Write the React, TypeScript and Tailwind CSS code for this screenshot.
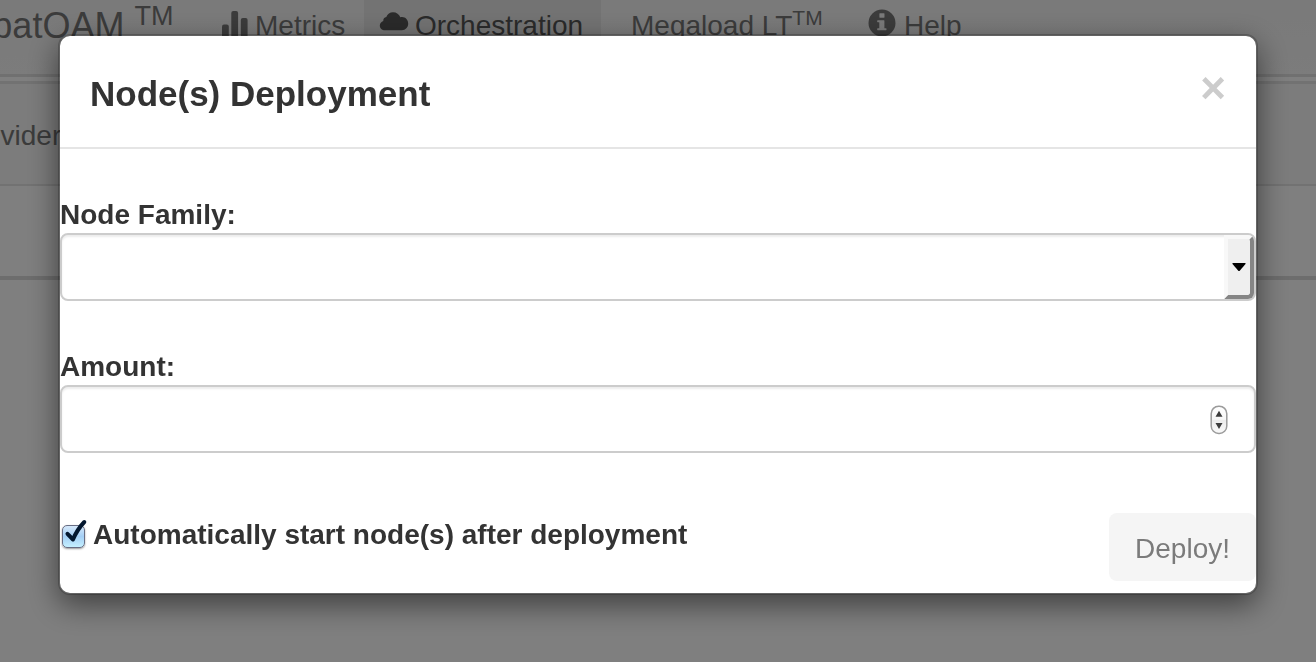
import React, { useState } from "react";

function StatsIcon() {
  return (
    <svg width="28" height="28" viewBox="0 0 28 28" fill="currentColor" aria-hidden="true">
      <rect x="1" y="14.500" width="6.800" height="18" rx="2" />
      <rect x="10.300" y="1" width="6.800" height="30" rx="2" />
      <rect x="19.800" y="8" width="6.800" height="23" rx="2" />
    </svg>
  );
}

function CloudIcon() {
  return (
    <svg width="30" height="28" viewBox="0 0 30 28" fill="currentColor" aria-hidden="true">
      <path d="M6 20.300C3 20.300.8 18.300.8 15.500c0-2.300 1.500-4 3.500-4.600C4.100 8.900 5.400 7.200 7.300 6.900 8.400 4 11 2.200 14 2.200c3.400 0 6.300 2 7.300 5 .600-.200 1.200-.200 1.800-.200 3.500 0 6.100 2.900 6.100 6.600 0 3.800-2.700 6.700-6.300 6.700z" />
    </svg>
  );
}

function InfoIcon() {
  return (
    <svg width="28" height="28" viewBox="0 0 28 28" fill="currentColor" aria-hidden="true">
      <path
        fillRule="evenodd"
        d="M14 .5a13.500 13.500 0 1 1 0 27 13.500 13.500 0 0 1 0-27zM11.900 4.300c-.3 0-.5.200-.5.500v3.400c0 .300.200.500.500.500h4.100c.300 0 .500-.200.500-.500V4.800c0-.300-.200-.500-.500-.500zM9.700 11.300c-.3 0-.5.200-.5.500v1c0 .300.200.500.500.500h1.600v6H9.700c-.3 0-.5.200-.5.500v1c0 .300.200.500.500.500h8.300c.300 0 .500-.200.500-.500v-1c0-.300-.200-.500-.500-.500h-1.600v-7.500c0-.300-.200-.500-.500-.500z"
      />
    </svg>
  );
}

function Page() {
  return (
    <div className="min-h-screen overflow-hidden bg-white text-[28px] leading-10 text-[#777]">
      <nav className="flex h-[77px] items-start border-b-3 border-[#e0e0e0] bg-linear-to-b from-[#f4f4f4] to-[#f8f8f8]">
        <a href="#home" className="-ml-[91px] h-full w-[296px] shrink-0 pt-1.5 text-[36px] whitespace-nowrap">
          WombatOAM <sup className="text-[27px]">TM</sup>
        </a>
        <a href="#metrics" className="flex h-full w-[159px] shrink-0 gap-1.5 px-4 pt-1.5">
          <span className="mt-1"><StatsIcon /></span>
          Metrics
        </a>
        <a href="#orchestration" className="flex h-full w-[237px] shrink-0 gap-1.5 bg-[#e7e7e7] px-[15px] pt-1.5 text-[#555]">
          <span className="mt-1"><CloudIcon /></span>
          Orchestration
        </a>
        <a href="#megaload" className="h-full w-[251px] shrink-0 px-[30px] pt-1.5 whitespace-nowrap">
          Megaload LT<sup className="text-[21px]">TM</sup>
        </a>
        <a href="#help" className="flex h-full shrink-0 gap-2 px-4 pt-1.5">
          <span className="mt-[3px]"><InfoIcon /></span>
          Help
        </a>
      </nav>
      <div className="mt-1 h-[105px] border-t-3 border-b-2 border-[#e4e4e4] bg-[#f8f8f8] pt-8">
        <a href="#providers" className="-ml-[43px]">Providers</a>
      </div>
      <div className="h-[94px] border-b-4 border-[#dadada]" />
    </div>
  );
}

function DeploymentDialog() {
  const [family, setFamily] = useState("");
  const [amount, setAmount] = useState("");
  const [autoStart, setAutoStart] = useState(true);
  return (
    <div className="fixed inset-0 overflow-auto bg-black/50 px-[58px] pt-[34px]">
      <div
        role="dialog"
        aria-modal="true"
        aria-labelledby="dialog-title"
        className="rounded-[12px] border-2 border-black/20 bg-white bg-clip-padding text-[28px] leading-9 text-[#333] shadow-[0_10px_30px_rgba(0,0,0,0.5)]"
      >
        <header className="flex items-start justify-between border-b-2 border-[#e5e5e5] px-[30px] pt-8 pb-7">
          <h1 id="dialog-title" className="text-[35px] leading-[51px] font-bold">Node(s) Deployment</h1>
          <button type="button" aria-label="Close" className="text-[44px] leading-10 font-bold text-[#ccc]">
            ×
          </button>
        </header>
        <form className="flex flex-col pt-12 pb-3" onSubmit={(e) => e.preventDefault()}>
          <label htmlFor="family" className="font-bold">Node Family:</label>
          <div className="relative h-[68px]">
            <select
              id="family"
              value={family}
              onChange={(e) => setFamily(e.target.value)}
              className="h-full w-full appearance-none rounded-lg border-2 border-[#ccc] bg-white px-6 shadow-[inset_0_2px_2px_rgba(0,0,0,0.075)]"
            >
              <option value=""></option>
            </select>
            <div className="pointer-events-none absolute inset-y-[2px] right-[2px] flex w-[30px] items-center justify-center rounded-r-md border-4 border-t-[#f8f8f8] border-r-[#858585] border-b-[#858585] border-l-[#f8f8f8] bg-[#efefef]">
              <svg width="14" height="8" viewBox="0 0 14 8" aria-hidden="true">
                <path d="M.5 0h13v1L7.500 8h-1L.5 1z" fill="#000" />
              </svg>
            </div>
          </div>
          <label htmlFor="amount" className="mt-12 font-bold">Amount:</label>
          <div className="relative h-[68px]">
            <input
              id="amount"
              type="number"
              value={amount}
              onChange={(e) => setAmount(e.target.value)}
              className="h-full w-full appearance-none rounded-lg border-2 border-[#ccc] bg-white px-6 shadow-[inset_0_2px_2px_rgba(0,0,0,0.075)] [&::-webkit-inner-spin-button]:appearance-none"
            />
            <svg className="pointer-events-none absolute top-5 right-7" width="18" height="30" viewBox="0 0 18 30" aria-hidden="true">
              <defs>
                <linearGradient id="spin" x1="0" y1="0" x2="0" y2="1">
                  <stop offset="0" stopColor="#fff" />
                  <stop offset=".48" stopColor="#f7f7f7" />
                  <stop offset=".52" stopColor="#ebebeb" />
                  <stop offset="1" stopColor="#fafafa" />
                </linearGradient>
              </defs>
              <rect x="1.200" y="1.200" width="15.600" height="27.300" rx="7.500" fill="url(#spin)" stroke="#9b9b9b" strokeWidth="1.500" />
              <path d="M9 5.800l3.500 6h-7zM9 24l3.500-6h-7z" fill="#3c3c3c" />
            </svg>
          </div>
          <div className="mt-[60px] flex items-start justify-between">
            <label className="flex items-center gap-2 pl-[2px] leading-[44px] font-bold">
              <span className="relative mt-[3px] h-6 w-[23px]">
                <input
                  type="checkbox"
                  checked={autoStart}
                  onChange={(e) => setAutoStart(e.target.checked)}
                  className="peer block h-[23px] w-[23px] appearance-none rounded-[5px] border border-[#686d84] bg-linear-to-b from-[#d5e8fa] via-[#a4cff5] to-[#c5f0ff] shadow-[0_1px_2px_rgba(0,0,0,0.4)]"
                />
                <svg className="pointer-events-none absolute -top-1.5 left-0 hidden peer-checked:block" width="26" height="26" viewBox="0 0 26 26" aria-hidden="true">
                  <path d="M5.500 14.800L11 20.500C13.500 14.500 17.500 8 22.300 3" fill="none" stroke="#04182f" strokeWidth="4" strokeLinecap="round" strokeLinejoin="round" />
                </svg>
              </span>
              Automatically start node(s) after deployment
            </label>
            <button type="submit" disabled className="h-[68px] rounded-lg bg-[#f5f5f5] px-[26px] pt-[3px] text-[#7b7b7b]">
              Deploy!
            </button>
          </div>
        </form>
      </div>
    </div>
  );
}

export default function App() {
  return (
    <div className="font-['Liberation_Sans',sans-serif]">
      <Page />
      <DeploymentDialog />
    </div>
  );
}
